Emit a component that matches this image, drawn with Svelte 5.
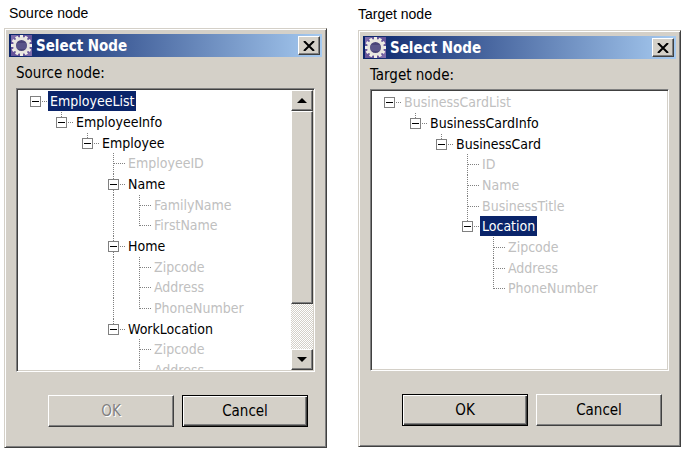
<script>
    /*=============================================
    =            Properties             =
    =============================================*/

        /**
         * The two node pickers. Every node is [depth, name, selectable].
         */
        const pickers = [
            {
                id: "source",
                caption: "Source node",
                label: "Source node:",
                scrollable: true,
                can_confirm: false,
                nodes: [
                    [0, "EmployeeList", true],
                    [1, "EmployeeInfo", true],
                    [2, "Employee", true],
                    [3, "EmployeeID", false],
                    [3, "Name", true],
                    [4, "FamilyName", false],
                    [4, "FirstName", false],
                    [3, "Home", true],
                    [4, "Zipcode", false],
                    [4, "Address", false],
                    [4, "PhoneNumber", false],
                    [3, "WorkLocation", true],
                    [4, "Zipcode", false],
                    [4, "Address", false]
                ]
            },
            {
                id: "target",
                caption: "Target node",
                label: "Target node:",
                scrollable: false,
                can_confirm: true,
                nodes: [
                    [0, "BusinessCardList", false],
                    [1, "BusinessCardInfo", true],
                    [2, "BusinessCard", true],
                    [3, "ID", false],
                    [3, "Name", false],
                    [3, "BusinessTitle", false],
                    [3, "Location", true],
                    [4, "Zipcode", false],
                    [4, "Address", false],
                    [4, "PhoneNumber", false]
                ]
            }
        ];

        /** Index of the selected node in each picker */
        let selected = { source: 0, target: 6 };

        /** Keys of the folded nodes */
        let collapsed = {};

        let viewports = {};

        /** Teeth of the title bar gear */
        const teeth = [...Array(12).keys()].map((i) => i * 30);

    /*=====  End of Properties  ======*/

    /*=============================================
    =            Methods            =
    =============================================*/

        /**
         * Whether the branch at the given depth goes on below this row.
         */
        const continuesBelow = (nodes, index, depth) => {
            for (let i = index + 1; i < nodes.length; i++) {
                if (nodes[i][0] < depth) return false;
                if (nodes[i][0] === depth) return true;
            }
            return false;
        }

        const buildRows = (picker, folded) => {
            let hidden_below = Infinity;
            const rows = [];

            picker.nodes.forEach(([depth, name, enabled], index) => {
                if (depth > hidden_below) return;
                hidden_below = Infinity;

                const key = `${picker.id}-${index}`;
                const parent = picker.nodes[index + 1]?.[0] > depth;
                if (folded[key]) hidden_below = depth;

                const guides = [];
                for (let d = 0; d < depth; d++) {
                    guides.push(continuesBelow(picker.nodes, index, d));
                }

                rows.push({ key, index, depth, name, enabled, parent, guides,
                    more: continuesBelow(picker.nodes, index, depth) });
            });
            return rows;
        }

        const toggle = (key) => {
            collapsed[key] = !collapsed[key];
        }

        const scroll = (id, amount) => {
            viewports[id].scrollBy(0, amount);
        }

    /*=====  End of Methods  ======*/
</script>

<main>
    {#each pickers as picker}
        <figure class={picker.id}>
            <figcaption>{picker.caption}</figcaption>
            <section class="dialog" aria-labelledby="{picker.id}-title">
                <header>
                    <svg class="gear" viewBox="0 0 21 21" aria-hidden="true">
                        <rect width="21" height="21" fill="#66549a" />
                        <path d="M0 0H6L0 7ZM21 21H15L21 14Z" fill="#7d6bab" />
                        {#each teeth as angle}
                            <rect x="9" y="0" width="3" height="4" fill="#f0eee6" transform="rotate({angle} 10.5 10.5)" />
                        {/each}
                        <circle cx="10.5" cy="10.5" r="7" fill="#4a4478" stroke="#e8e6e0" stroke-width="3" />
                        <path d="M6 9H15M5 11H16M6 13H15" stroke="#6a669a" />
                    </svg>
                    <h2 id="{picker.id}-title">Select Node</h2>
                    <button class="close" aria-label="Close">
                        <svg width="12" height="10" viewBox="0 0 12 10">
                            <path d="M1 0L11 10M11 0L1 10" stroke="#000" stroke-width="2" />
                        </svg>
                    </button>
                </header>

                <div class="content">
                    <p id="{picker.id}-label">{picker.label}</p>
                    <div class="list">
                        <ul bind:this={viewports[picker.id]} aria-labelledby="{picker.id}-label">
                            {#each buildRows(picker, collapsed) as row (row.key)}
                                <li>
                                    {#each row.guides as line}
                                        <svg class="cell" viewBox="0 0 26 21" aria-hidden="true">
                                            {#if line}<path class="dots" d="M13.5 0V21" />{/if}
                                        </svg>
                                    {/each}
                                    {#if row.parent}
                                        <button class="cell" aria-label="Toggle {row.name}" on:click={() => toggle(row.key)}>
                                            <svg class="cell" viewBox="0 0 26 21">
                                                {#if row.depth > 0}<path class="dots" d="M13.5 0V5" />{/if}
                                                {#if row.more}<path class="dots" d="M13.5 16V21" />{/if}
                                                <path class="dots" d="M20 10.5H26" />
                                                <rect x="8.5" y="5.5" width="10" height="10" fill="#fff" stroke="#808080" />
                                                <path d="M10 10.5H17" stroke="#000" stroke-width="1" />
                                                {#if collapsed[row.key]}<path d="M13.5 7V14" stroke="#000" stroke-width="1" />{/if}
                                            </svg>
                                        </button>
                                    {:else}
                                        <svg class="cell" viewBox="0 0 26 21" aria-hidden="true">
                                            <path class="dots" d="M13.5 0V{row.more ? 21 : 11}M14 10.5H26" />
                                        </svg>
                                    {/if}
                                    <button
                                        class="node"
                                        class:selected={selected[picker.id] === row.index}
                                        disabled={!row.enabled}
                                        on:click={() => (selected[picker.id] = row.index)}
                                    >{row.name}</button>
                                </li>
                            {/each}
                        </ul>
                        {#if picker.scrollable}
                            <div class="scrollbar">
                                <button aria-label="Scroll up" on:click={() => scroll(picker.id, -21)}>
                                    <svg width="10" height="5" viewBox="0 0 10 5"><path d="M5 0L10 5H0Z" /></svg>
                                </button>
                                <div class="thumb"></div>
                                <div class="track"></div>
                                <button aria-label="Scroll down" on:click={() => scroll(picker.id, 21)}>
                                    <svg width="10" height="5" viewBox="0 0 10 5"><path d="M0 0H10L5 5Z" /></svg>
                                </button>
                            </div>
                        {/if}
                    </div>
                    <footer>
                        <button class="action" class:default={picker.can_confirm} disabled={!picker.can_confirm}>OK</button>
                        <button class="action" class:default={!picker.can_confirm}>Cancel</button>
                    </footer>
                </div>
            </section>
        </figure>
    {/each}
</main>

<style>
    :global(body) {
        margin: 0;
        background: #fff;
    }

    main {
        display: grid;
        grid-template-columns: 1fr 1fr;
        gap: 31px;
        padding: 0 4px;
        font: 14px/20px "DejaVu Sans Condensed", Tahoma, sans-serif;
        color: #000;
    }

    figure, h2, p, ul {
        margin: 0;
        padding: 0;
    }

    figcaption {
        margin-bottom: 2px;
        padding-left: 5px;
        font: 14px/26px "Liberation Sans", Arial, sans-serif;
    }

    .target figcaption {
        padding-left: 0;
        line-height: 28px;
    }

    button {
        box-sizing: border-box;
        padding: 0;
        border: 0;
        background: none;
        color: inherit;
        font: inherit;
    }

    .dialog {
        padding: 4px 3px 20px;
        background: #d4d0c8;
        border: 1px solid;
        border-color: #d4d0c8 #404040 #404040 #d4d0c8;
        box-shadow: inset 1px 1px #fff, inset -1px -1px #808080;
    }

    header {
        display: flex;
        align-items: center;
        gap: 4px;
        height: 23px;
        margin: 1px 1px 0;
        padding: 0 2px;
        background: linear-gradient(90deg, #0a246a, #a6caf0);
    }

    .gear {
        flex: none;
        width: 21px;
        height: 21px;
    }

    h2 {
        flex: 1;
        color: #fff;
        font-size: 15px;
        font-weight: bold;
        line-height: 22px;
    }

    .close, .scrollbar button, .thumb, .action {
        display: flex;
        align-items: center;
        justify-content: center;
        background: #d4d0c8;
        border: 1px solid;
        border-color: #fff #404040 #404040 #fff;
        box-shadow: inset -1px -1px #808080;
    }

    .close {
        width: 22px;
        height: 19px;
    }

    .content {
        padding: 6px 8px 0;
    }

    p {
        font-size: 15px;
    }

    .list {
        display: flex;
        box-sizing: border-box;
        height: 284px;
        margin-top: 5px;
        background: #fff;
        border: 1px solid;
        border-color: #808080 #fff #fff #808080;
        box-shadow: inset 1px 1px #404040, inset -1px -1px #d4d0c8;
        padding: 1px;
    }

    .target .list {
        height: 282px;
        margin-top: 4px;
    }

    ul {
        flex: 1;
        overflow: hidden;
        padding: 1px 0 0 4px;
        list-style: none;
    }

    li {
        display: flex;
        height: 21px;
        overflow: hidden;
    }

    li:nth-child(3n) {
        height: 20px;
    }

    .cell {
        display: block;
        flex: none;
        width: 26px;
        height: 21px;
    }

    .dots {
        fill: none;
        stroke: #808080;
        stroke-dasharray: 1 1;
    }

    .node {
        height: 20px;
        padding: 0 2px;
        white-space: nowrap;
    }

    .node:disabled {
        color: #c0c0c0;
    }

    .node.selected {
        background: #0a246a;
        color: #fff;
    }

    .scrollbar {
        display: flex;
        flex-direction: column;
        width: 22px;
    }

    .scrollbar button {
        flex: none;
        width: 22px;
        height: 21px;
    }

    .thumb {
        flex: 193;
    }

    .track {
        flex: 45;
        background: repeating-conic-gradient(#fff 0 25%, #d4d0c8 0 50%) 0 0 / 2px 2px;
    }

    footer {
        display: flex;
        justify-content: flex-end;
        gap: 8px;
        padding: 23px 7px 0;
    }

    .action {
        width: 126px;
        height: 32px;
        font-size: 15px;
    }

    .action:disabled {
        color: #808080;
        text-shadow: 1px 1px #fff;
    }

    .action.default {
        border-color: #000;
        box-shadow: inset 1px 1px #fff, inset -1px -1px #404040, inset -2px -2px #808080;
    }
</style>
